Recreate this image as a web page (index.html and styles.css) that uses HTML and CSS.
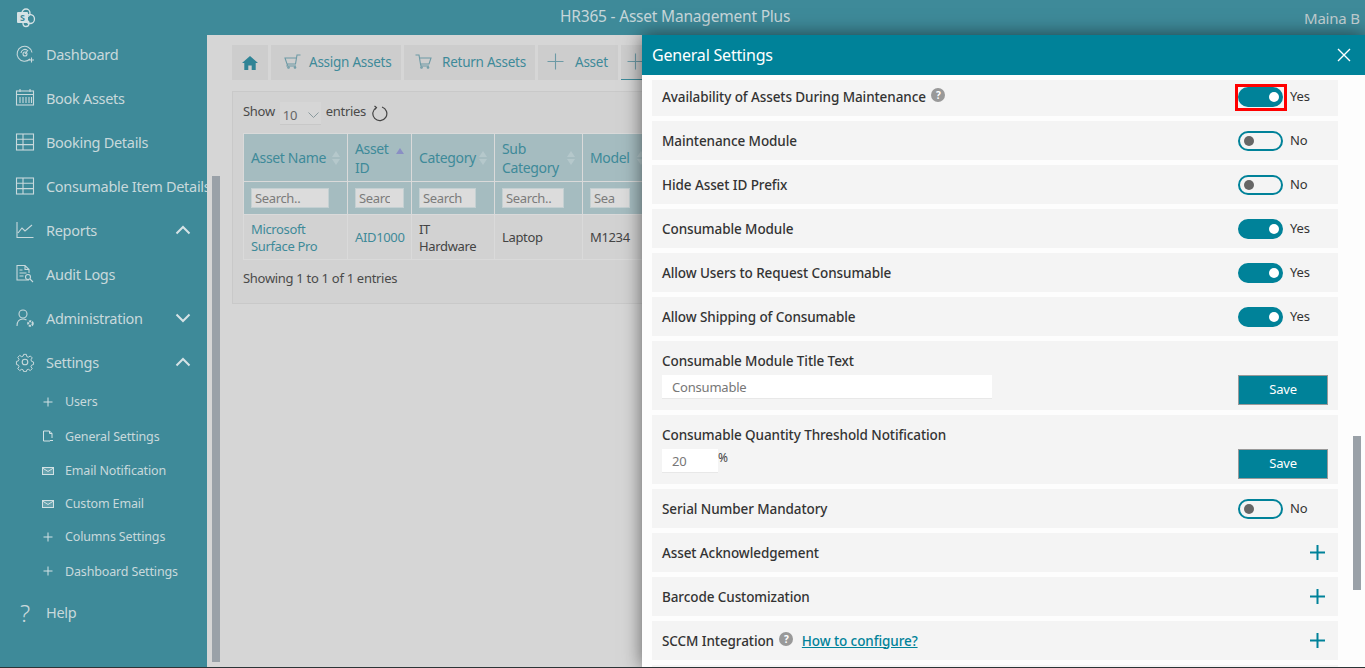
FILE: index.html
```html
<!DOCTYPE html>
<html lang="en">
<head>
  <meta charset="UTF-8" />
  <meta name="viewport" content="width=device-width, initial-scale=1.0"/>
  <title>HR365 - Asset Management Plus</title>
  <link rel="stylesheet" href="styles.css">
</head>
<body>
  <div id="app">
    <header class="topbar">
      <svg class="logo" width="20" height="20" viewBox="0 0 20 20">
        <circle cx="10" cy="5" r="4" fill="none" stroke="#d5e2e5" stroke-width="1.3"/>
        <circle cx="14" cy="11" r="4.5" fill="none" stroke="#d5e2e5" stroke-width="1.3"/>
        <circle cx="10" cy="15.500" r="3" fill="none" stroke="#d5e2e5" stroke-width="1.3"/>
        <rect x="1" y="4" width="11" height="11" rx="1" fill="#d5e2e5"/>
        <text x="6.500" y="13" class="logo-s">S</text>
      </svg>
      <span class="app-title">HR365 - Asset Management Plus</span>
      <span class="user-name">Maina B</span>
    </header>

    <div class="body-row">
      <nav class="sidebar">
        <a class="nav-item">
          <svg class="nav-icon" viewBox="0 0 20 20"><path d="M15 15A7.5 7.5 0 1 1 17 8.500M10 10l3-4"/><circle cx="10" cy="10" r="2"/><path d="M6 9a4 4 0 0 1 6-3M14 16h5M16.500 13.500v5"/></svg>
          <span>Dashboard</span>
        </a>
        <a class="nav-item">
          <svg class="nav-icon" viewBox="0 0 20 20"><rect x="1.500" y="3" width="17" height="14"/><path d="M1.500 6.500h17M5 1v3M15 1v3M5 9v6M8 9v6M11 9v6M14 9v6M16.500 9v6"/></svg>
          <span>Book Assets</span>
        </a>
        <a class="nav-item">
          <svg class="nav-icon" viewBox="0 0 20 20"><rect x="1.500" y="2" width="17" height="16"/><path d="M1.500 7.300h17M1.500 12.600h17M8 2v16"/></svg>
          <span>Booking Details</span>
        </a>
        <a class="nav-item">
          <svg class="nav-icon" viewBox="0 0 20 20"><rect x="1.500" y="2" width="17" height="16"/><path d="M1.500 7.300h17M1.500 12.600h17M8 2v16"/></svg>
          <span>Consumable Item Details</span>
        </a>
        <a class="nav-item">
          <svg class="nav-icon" viewBox="0 0 20 20"><path d="M2 2v15.500h16.500M3 13l4-5 3 3 7-6"/></svg>
          <span>Reports</span>
          <svg class="chev" viewBox="0 0 16 10"><path d="M1.500 8.500 8 2l6.500 6.500"/></svg>
        </a>
        <a class="nav-item">
          <svg class="nav-icon" viewBox="0 0 20 20"><path d="M14 16H2V1.500h8l4 4V9M10 1.500v4h4M4.500 6h3M4.500 9h7M4.500 12h4"/><circle cx="13" cy="13" r="2.500"/><path d="M15 15l3 3"/></svg>
          <span>Audit Logs</span>
        </a>
        <a class="nav-item">
          <svg class="nav-icon" viewBox="0 0 20 20"><circle cx="8" cy="6" r="4"/><path d="M2 18c0-5 3-7 6-7 1.500 0 2.500.4 3.500 1"/><circle cx="15.500" cy="15.500" r="2.300" stroke-width="2" stroke-dasharray="2 .8"/></svg>
          <span>Administration</span>
          <svg class="chev" viewBox="0 0 16 10"><path d="M1.500 1.500 8 8l6.500-6.500"/></svg>
        </a>
        <a class="nav-item">
          <svg class="nav-icon" viewBox="0 0 20 20"><circle cx="10" cy="10" r="2.800"/><path d="M8.500 1.500h3l.5 2.500 1.700.7 2.200-1.400 2.100 2.100-1.400 2.200.7 1.700 2.200.7v2.800l-2.200.7-.7 1.700 1.400 2.200-2.100 2.100-2.200-1.400-1.700.7-.5 1.900h-3l-.5-1.900-1.700-.7-2.200 1.400-2.100-2.100 1.400-2.200-.7-1.700-2.200-.7V9.400l2.200-.7.700-1.700-1.400-2.200 2.100-2.100 2.200 1.400 1.700-.7z" transform="translate(1 1) scale(.9)"/></svg>
          <span>Settings</span>
          <svg class="chev" viewBox="0 0 16 10"><path d="M1.500 8.500 8 2l6.500 6.500"/></svg>
        </a>
        <div class="sub-nav">
          <a class="sub-item s-users">
            <svg class="sub-icon" viewBox="0 0 12 12"><path d="M6 1.500v9M1.500 6h9"/></svg>
            <span>Users</span>
          </a>
          <a class="sub-item s-general">
            <svg class="sub-icon" viewBox="0 0 12 12"><path d="M10 8V3.500L7.500 1H1.500v10H8M7.500 1v2.500H10M8 10.500h3"/></svg>
            <span>General Settings</span>
          </a>
          <a class="sub-item">
            <svg class="sub-icon" viewBox="0 0 12 12"><rect x=".5" y="2.500" width="11" height="7" fill="rgba(255,255,255,.2)"/><path d="M.5 3 6 6.500 11.500 3"/></svg>
            <span>Email Notification</span>
          </a>
          <a class="sub-item">
            <svg class="sub-icon" viewBox="0 0 12 12"><rect x=".5" y="2.500" width="11" height="7" fill="rgba(255,255,255,.2)"/><path d="M.5 3 6 6.500 11.500 3"/></svg>
            <span>Custom Email</span>
          </a>
          <a class="sub-item">
            <svg class="sub-icon" viewBox="0 0 12 12"><path d="M6 1.500v9M1.500 6h9"/></svg>
            <span>Columns Settings</span>
          </a>
          <a class="sub-item s-last">
            <svg class="sub-icon" viewBox="0 0 12 12"><path d="M6 1.500v9M1.500 6h9"/></svg>
            <span>Dashboard Settings</span>
          </a>
        </div>
        <a class="nav-item help-item">
          <span class="help-glyph">?</span>
          <span>Help</span>
        </a>
      </nav>

      <main class="content">
        <div class="side-thumb"></div>
        <div class="tabs">
          <a class="tab tab-home">
            <svg width="16" height="14" viewBox="0 0 16 14"><path fill="#2f8496" d="M8 0 0 7h2.300v7h4v-4.500h3.400V14h4V7H16z"/></svg>
          </a>
          <a class="tab tab-w1">
            <svg class="tab-icon" width="17" height="15" viewBox="0 0 17 15"><path d="M16.500 1H13l-1.500 9H3L1 4h11.500M3.500 10l-.5 2h9"/><circle cx="4.500" cy="13.500" r=".8"/><circle cx="11" cy="13.500" r=".8"/></svg>
            Assign Assets
          </a>
          <a class="tab tab-w2">
            <svg class="tab-icon" width="17" height="15" viewBox="0 0 17 15"><path d="M.5 1H4l1.500 9H14l2-6H4.500M5.500 10l.5 2h8"/><circle cx="6.500" cy="13.500" r=".8"/><circle cx="13" cy="13.500" r=".8"/></svg>
            Return Assets
          </a>
          <a class="tab tab-w3">
            <svg class="tab-icon" width="17" height="17" viewBox="0 0 17 17"><path d="M8.500.5v16M.5 8.500h16"/></svg>
            Asset
          </a>
          <a class="tab tab-w4 tab-active">
            <svg class="tab-icon" width="17" height="17" viewBox="0 0 17 17"><path d="M8.500.5v16M.5 8.500h16"/></svg>
          </a>
        </div>

        <section class="card">
          <div class="table-tools">
            <span>Show</span>
            <span class="page-size">10
              <svg width="11" height="6" viewBox="0 0 11 6"><path d="M.5.500l5 5 5-5" fill="none" stroke="#8a9a9e"/></svg>
            </span>
            <span>entries</span>
            <svg class="refresh" width="17" height="17" viewBox="0 0 17 17"><path d="M5.500 2.500A7 7 0 1 0 11 2M3.500 1l2 1.500L4 4.500" fill="none" stroke="#444" stroke-width="1.200"/></svg>
          </div>
          <table class="data-table">
            <colgroup>
              <col class="c1"><col class="c2"><col class="c3"><col class="c4"><col class="c5">
            </colgroup>
            <thead>
              <tr class="head-row">
                <th><div class="th-in">Asset Name<i class="sort"></i></div></th>
                <th><div class="th-in">Asset<br>ID<i class="sort sort-asc"></i></div></th>
                <th><div class="th-in">Category<i class="sort"></i></div></th>
                <th><div class="th-in">Sub<br>Category<i class="sort"></i></div></th>
                <th><div class="th-in">Model<i class="sort"></i></div></th>
              </tr>
              <tr class="filter-row">
                <th><input class="f1" placeholder="Search.."></th>
                <th><input class="f2" placeholder="Search.."></th>
                <th><input class="f3" placeholder="Search.."></th>
                <th><input class="f4" placeholder="Search.."></th>
                <th><input class="f5" placeholder="Search.."></th>
              </tr>
            </thead>
            <tbody>
              <tr>
                <td><a class="cell-link">Microsoft Surface Pro</a></td>
                <td><a class="cell-link">AID1000</a></td>
                <td>IT Hardware</td>
                <td>Laptop</td>
                <td>M1234</td>
              </tr>
            </tbody>
          </table>
          <div class="table-info">Showing 1 to 1 of 1 entries</div>
        </section>
      </main>
    </div>

    <aside class="panel">
      <div class="panel-head">
        <span>General Settings</span>
        <svg width="14" height="14" viewBox="0 0 14 14"><path d="M1 1l12 12M13 1 1 13" stroke="#fff" stroke-width="1.400" fill="none"/></svg>
      </div>
      <div class="panel-body">
        <div class="row row-first">
          <span class="row-label">Availability of Assets During Maintenance <i class="q">?</i></span>
          <div class="row-ctl"><span class="focus-box"><span class="toggle on"></span></span><span class="toggle-text">Yes</span></div>
        </div>
        <div class="row">
          <span class="row-label">Maintenance Module</span>
          <div class="row-ctl"><span class="toggle"></span><span class="toggle-text">No</span></div>
        </div>
        <div class="row">
          <span class="row-label">Hide Asset ID Prefix</span>
          <div class="row-ctl"><span class="toggle"></span><span class="toggle-text">No</span></div>
        </div>
        <div class="row">
          <span class="row-label">Consumable Module</span>
          <div class="row-ctl"><span class="toggle on"></span><span class="toggle-text">Yes</span></div>
        </div>
        <div class="row">
          <span class="row-label">Allow Users to Request Consumable</span>
          <div class="row-ctl"><span class="toggle on"></span><span class="toggle-text">Yes</span></div>
        </div>
        <div class="row">
          <span class="row-label">Allow Shipping of Consumable</span>
          <div class="row-ctl"><span class="toggle on"></span><span class="toggle-text">Yes</span></div>
        </div>
        <div class="row row-tall">
          <div class="tall-main">
            <span class="row-label">Consumable Module Title Text</span>
            <input class="text-field wide" value="Consumable">
          </div>
          <button class="save-btn">Save</button>
        </div>
        <div class="row row-tall">
          <div class="tall-main">
            <span class="row-label">Consumable Quantity Threshold Notification</span>
            <div class="pct-line"><input class="text-field narrow" value="20"><span class="pct">%</span></div>
          </div>
          <button class="save-btn">Save</button>
        </div>
        <div class="row">
          <span class="row-label">Serial Number Mandatory</span>
          <div class="row-ctl"><span class="toggle"></span><span class="toggle-text">No</span></div>
        </div>
        <div class="row">
          <span class="row-label">Asset Acknowledgement</span>
          <svg class="plus" width="15" height="15" viewBox="0 0 15 15"><path d="M7.500 0v15M0 7.500h15"/></svg>
        </div>
        <div class="row">
          <span class="row-label">Barcode Customization</span>
          <svg class="plus" width="15" height="15" viewBox="0 0 15 15"><path d="M7.500 0v15M0 7.500h15"/></svg>
        </div>
        <div class="row">
          <span class="row-label">SCCM Integration <i class="q">?</i> <a class="how-link">How to configure?</a></span>
          <svg class="plus" width="15" height="15" viewBox="0 0 15 15"><path d="M7.500 0v15M0 7.500h15"/></svg>
        </div>
        <div class="row"></div>
      </div>
      <div class="panel-thumb"></div>
    </aside>
  </div>
</body>
</html>
```

FILE: styles.css
```css
* {
  box-sizing: border-box;
}

html, body {
  margin: 0;
  height: 100%;
  overflow: hidden;
  background: #2c3436;
}

#app {
  position: relative;
  width: 1365px;
  height: 667px;
  overflow: hidden;
  font-family: "Noto Sans", "Open Sans", sans-serif;
  font-size: 13px;
  letter-spacing: -0.2px;
  color: #444;
}

/* top bar */
.topbar {
  display: flex;
  align-items: center;
  position: relative;
  height: 35px;
  padding-left: 16px;
  background: #3e8a99;
  color: #c6d6da;
}

.logo-s {
  font-size: 9px;
  font-weight: 700;
  fill: #3e8a99;
  text-anchor: middle;
  letter-spacing: 0;
}

.app-title {
  position: absolute;
  left: 560px;
  top: 5px;
  font-size: 15.500px;
}

.user-name {
  position: absolute;
  left: 1304px;
  top: 8px;
  font-size: 15px;
  white-space: nowrap;
  z-index: 3;
  color: #bcc8cb;
}

.body-row {
  display: flex;
  height: 632px;
}

/* sidebar */
.sidebar {
  width: 207px;
  flex: none;
  background: #3e8a99;
  color: #c8d9dc;
  overflow: hidden;
  white-space: nowrap;
}

.nav-item {
  display: flex;
  align-items: center;
  height: 44px;
  padding-left: 15px;
  font-size: 14.5px;
  letter-spacing: -0.3px;
  position: relative;
}

.nav-item:first-child {
  margin-top: -3px;
}

.nav-icon {
  width: 20px;
  height: 20px;
  flex: none;
  margin-right: 11px;
  fill: none;
  stroke: #c8d9dc;
  stroke-width: 1.100;
}

.chev {
  position: absolute;
  left: 175px;
  top: 17px;
  width: 16px;
  height: 10px;
  fill: none;
  stroke: #d6e3e6;
  stroke-width: 2;
}

.sub-nav {
  display: flex;
  flex-direction: column;
}

.sub-item {
  display: flex;
  align-items: center;
  height: 33px;
  padding-left: 42px;
  font-size: 12.500px;
  letter-spacing: -0.15px;
}

.s-users {
  height: 33px;
  margin-top: 1px;
}

.s-general {
  height: 36px;
}

.s-last {
  height: 36px;
}

.sub-icon {
  width: 12px;
  height: 12px;
  flex: none;
  margin-right: 11px;
  fill: none;
  stroke: #d3e2e5;
  stroke-width: 1;
}

.help-item {
  margin-top: 1px;
}

.help-glyph {
  width: 20px;
  margin-right: 11px;
  text-align: center;
  font-size: 24px;
  font-weight: 300;
}

/* main area behind the panel */
.content {
  position: relative;
  flex: 1;
  min-width: 0;
  padding: 10px 0 0 25px;
  background: #d6d6d6;
}

.side-thumb {
  position: absolute;
  left: 5px;
  top: 141px;
  width: 8px;
  height: 486px;
  background: #9aa1a8;
}

.tabs {
  display: flex;
  gap: 3px;
  height: 35px;
}

.tab {
  display: flex;
  align-items: center;
  gap: 8px;
  padding-left: 13px;
  padding-bottom: 2px;
  background: #cdcdcd;
  color: #3e8a99;
  font-size: 13.500px;
  letter-spacing: -0.25px;
  white-space: nowrap;
}

.tab-home {
  width: 36px;
  padding-left: 10px;
  padding-bottom: 0;
}

.tab-w1 {
  width: 130px;
}

.tab-w2 {
  width: 131px;
  padding-left: 11px;
  gap: 10px;
}

.tab-w3 {
  width: 80px;
  padding-left: 9px;
  gap: 11px;
}

.tab-w4 {
  width: 130px;
  padding-left: 6px;
}

.tab-active {
  border-bottom: 1px solid #3e8a99;
}

.tab-icon {
  flex: none;
  fill: none;
  stroke: #6d9aa5;
  stroke-width: 1.100;
}

.card {
  width: 900px;
  height: 213px;
  margin-top: 11px;
  padding: 10px;
  background: #d2d2d2;
  border: 1px solid #c9c9c9;
}

.table-tools {
  display: flex;
  align-items: flex-start;
  height: 23px;
  line-height: 18px;
  color: #4a4a4a;
  letter-spacing: -0.3px;
}

.page-size {
  display: flex;
  align-items: center;
  justify-content: space-between;
  width: 41px;
  height: 23px;
  margin: 0 5px 0 5px;
  padding: 3px 2px 0 3px;
  background: #d6d6d6;
  border-bottom: 1px solid #c8c8c8;
  color: #666;
}

.refresh {
  margin: 3px 0 0 5px;
}

.data-table {
  table-layout: fixed;
  width: 409px;
  margin-top: 8px;
  border-collapse: collapse;
}

.c1 { width: 104px; }
.c2 { width: 64px; }
.c3 { width: 83px; }
.c4 { width: 88px; }
.c5 { width: 70px; }

.data-table th,
.data-table td {
  padding: 0 7px;
  border: 1px solid #dadada;
  font-weight: 400;
  text-align: left;
  letter-spacing: -0.35px;
}

.head-row th {
  height: 48px;
  font-size: 14px;
  line-height: 19px;
  background: #a5bcc0;
  color: #3e8a99;
}

.th-in {
  display: flex;
  align-items: center;
  justify-content: space-between;
}

.sort {
  display: flex;
  flex-direction: column;
  gap: 2px;
  flex: none;
}

.sort::before,
.sort::after {
  content: "";
  border-left: 4.500px solid transparent;
  border-right: 4.500px solid transparent;
}

.sort::before {
  border-bottom: 6px solid #b5c8cb;
}

.sort::after {
  border-top: 6px solid #b5c8cb;
}

.sort-asc {
  align-self: flex-start;
  margin-top: 9px;
}

.sort-asc::before {
  border-bottom-color: #8a8fc4;
}

.sort-asc::after {
  display: none;
}

.filter-row th {
  height: 33px;
  background: #a5bcc0;
}

.filter-row input {
  display: block;
  height: 20px;
  padding: 0 13px 0 3px;
  background: #dcdcdc;
  border: 1px solid #c4d0d2;
  font: inherit;
  letter-spacing: inherit;
}

.filter-row input::placeholder {
  color: #7b7b7b;
}

.f1 { width: 78px; }
.f2 { width: 49px; }
.f3 { width: 57px; }
.filter-row .f4 { width: 62px; padding-right: 8px; }
.filter-row .f5 { width: 40px; padding-right: 14px; }

.data-table td {
  height: 45px;
  padding-top: 1px;
  line-height: 17px;
  color: #444;
}

.cell-link {
  color: #3e8a99;
}

.table-info {
  margin-top: 9px;
  color: #4a4a4a;
  letter-spacing: -0.3px;
}

/* general settings panel */
.panel {
  position: absolute;
  top: 35px;
  left: 642px;
  right: 0;
  bottom: 0;
  overflow: hidden;
  background: #fdfdfd;
  box-shadow: 0 0 18px rgba(0, 0, 0, 0.55);
  clip-path: inset(-30px 0 0 -30px);
}

.panel-head {
  display: flex;
  align-items: center;
  justify-content: space-between;
  height: 40px;
  padding: 0 14px 0 10px;
  background: #008299;
  color: #fff;
  font-size: 16px;
}

.panel-body {
  display: flex;
  flex-direction: column;
  gap: 5px;
  width: 686px;
  margin: 5px 0 0 10px;
}

.row {
  display: flex;
  align-items: center;
  justify-content: space-between;
  flex: none;
  height: 39px;
  padding-left: 10px;
  background: #f4f4f4;
}

.row-first {
  height: 36px;
  padding-bottom: 3px;
}

.row-label {
  color: #333;
  font-weight: 500;
  font-size: 13.500px;
  letter-spacing: -0.09px;
}

.q {
  display: inline-flex;
  align-items: center;
  justify-content: center;
  width: 14px;
  height: 14px;
  margin-left: 2px;
  border-radius: 50%;
  background: #999;
  color: #fff;
  font-size: 10px;
  font-style: normal;
  font-weight: 700;
  vertical-align: 3px;
  letter-spacing: 0;
}

.how-link {
  margin-left: 5px;
  color: #008299;
  text-decoration: underline;
}

.row-ctl {
  display: flex;
  align-items: center;
  gap: 7px;
  width: 100px;
}

.toggle {
  position: relative;
  display: block;
  width: 45px;
  height: 20px;
  border: 2px solid #008299;
  border-radius: 10px;
}

.toggle::after {
  content: "";
  position: absolute;
  left: 4px;
  top: 3px;
  width: 10px;
  height: 10px;
  border-radius: 50%;
  background: #666;
}

.toggle.on {
  background: #008299;
}

.toggle.on::after {
  left: 29px;
  background: #fff;
}

.focus-box {
  display: block;
  margin: -3px -4px -4px -3px;
  padding: 0 1px 1px 0;
  border: 3px solid #f00;
}

.toggle-text {
  margin-top: -2px;
  color: #333;
  font-size: 13px;
}

.plus {
  margin-right: 13px;
  fill: none;
  stroke: #008299;
  stroke-width: 2;
}

.row-tall {
  height: 69px;
  align-items: flex-end;
  padding-bottom: 5px;
}

.tall-main {
  display: flex;
  flex-direction: column;
  align-self: flex-start;
  padding-top: 11px;
}

.row-tall .row-label {
  height: 23px;
}

.text-field {
  height: 24px;
  padding: 0 10px;
  background: #fff;
  border: 0;
  border-bottom: 1px solid #e8e8e8;
  color: #777;
  font: inherit;
  letter-spacing: inherit;
}

.wide {
  width: 330px;
}

.narrow {
  width: 56px;
}

.pct-line {
  display: flex;
  align-items: flex-start;
}

.pct {
  font-size: 12px;
  color: #444;
}

.save-btn {
  width: 90px;
  height: 30px;
  margin-right: 10px;
  padding: 0 0 2px;
  background: #008299;
  border: 1px solid #999;
  color: #fff;
  font: inherit;
  font-size: 13px;
  letter-spacing: inherit;
}

.panel-thumb {
  position: absolute;
  left: 711px;
  top: 401px;
  width: 8px;
  height: 154px;
  background: #9aa1a8;
}
```
